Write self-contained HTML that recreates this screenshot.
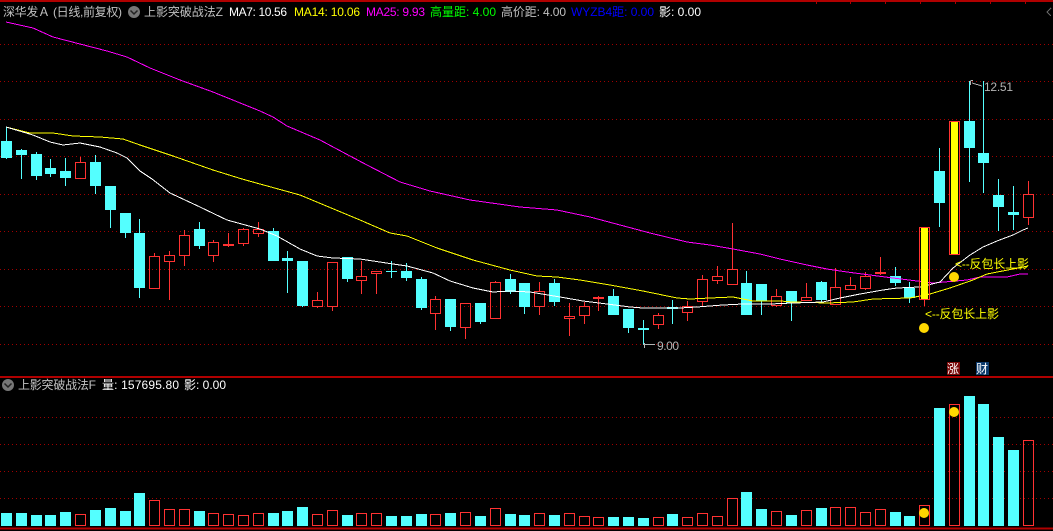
<!DOCTYPE html>
<html><head><meta charset="utf-8">
<style>
html,body{margin:0;padding:0;background:#000;width:1053px;height:531px;overflow:hidden}
svg{display:block}
text{font-family:"WenQuanYi Zen Hei","Liberation Sans","Noto Sans CJK SC",sans-serif;font-size:12px}
</style></head><body>
<svg width="1053" height="531" viewBox="0 0 1053 531" xmlns="http://www.w3.org/2000/svg">
<rect width="1053" height="531" fill="#000"/>
<g shape-rendering="crispEdges">
<path d="M0 44.5H1053M0 81.5H1053M0 119.5H1053M0 156.5H1053M0 194.5H1053M0 231.5H1053M0 269.5H1053M0 306.5H1053M0 344.5H1053M0 417.5H1053M0 444.5H1053M0 471.5H1053M0 498.5H1053" stroke="#a00000" stroke-dasharray="1 3" fill="none"/>
<path d="M0 1H1053M0 377H1053M0 528.5H1053" stroke="#b00000" stroke-width="2" fill="none"/>
<path d="M816.5 0V4M850.5 0V4M885.5 0V4M920.5 0V4M955.5 0V4M990.5 0V4M1025.5 0V4M23.5 0V2" stroke="#b00000" fill="none"/>

<!-- cyan wicks -->
<path stroke="#54ffff" fill="none" d="M6.5 127V159M21.5 149V179M36.5 152V180M50.5 159V177M65.5 158V186M95.5 155V194M110.5 186V228M125.5 213V238M139.5 219V298M199.5 222V249M273.5 228V261M287.5 251V293M302.5 261V307M347.5 257V282M391.5 261V278M406.5 263V281M421.5 277V310M450.5 299V331M480.5 303V324M510.5 274V294M524.5 283V314M554.5 279V306M613.5 289V315M628.5 309V333M643.5 320V345M672.5 300V324M746.5 271V315M761.5 284V315M791.5 291V321M821.5 281V303M895.5 267V286M909.5 282V303M939.5 148V227M969.5 81V182M983.5 81V193M998.5 179V231M1013.5 186V230"/>
<!-- cyan bodies -->
<path stroke="#54ffff" stroke-width="11" fill="none" d="M6.5 141V158M21.5 150V155M36.5 154V176M50.5 168V174M65.5 171V178M95.5 162V186M110.5 186V210M125.5 213V233M139.5 233V288M199.5 229V246M273.5 231V261M287.5 258V261M302.5 261V306M347.5 257V279M391.5 271V272M406.5 271V278M421.5 279V308M450.5 299V327M480.5 303V322M510.5 279V292M524.5 283V307M554.5 283V302M613.5 296V315M628.5 309V328M643.5 328V330M672.5 307V309M746.5 283V315M761.5 284V301M791.5 291V303M821.5 282V300M895.5 276V283M909.5 288V298M939.5 171V203M969.5 121V148M983.5 153V163M998.5 195V207M1013.5 212V215"/>
<!-- red wicks -->
<path stroke="#ff3232" fill="none" d="M80.5 157V162M154.5 253V256M169.5 251V255M169.5 262V300M184.5 230V235M184.5 256V266M213.5 240V242M213.5 256V262M228.5 233V244M228.5 246V247M243.5 228V229M243.5 244V246M258.5 222V229M258.5 234V237M317.5 292V300M317.5 307V308M332.5 307V311M361.5 261V276M361.5 281V294M376.5 274V294M435.5 296V299M435.5 314V330M465.5 328V339M495.5 281V282M539.5 282V291M539.5 307V315M569.5 303V316M569.5 319V336M584.5 302V306M584.5 316V324M598.5 296V297M598.5 299V311M658.5 313V315M658.5 325V329M687.5 301V306M687.5 313V321M702.5 275V279M702.5 302V307M717.5 266V276M717.5 281V284M732.5 223V269M776.5 289V296M776.5 306V307M806.5 283V297M835.5 268V287M850.5 277V285M865.5 272V276M865.5 289V290M880.5 257V272M880.5 274V275M924.5 300V306M1028.5 181V194M1028.5 218V225"/>
<!-- red bodies -->
<path stroke="#ff3232" fill="none" d="M75.5 162.5h10v16h-10zM149.5 256.5h10v32h-10zM164.5 255.5h10v6h-10zM179.5 235.5h10v20h-10zM208.5 242.5h10v13h-10zM223.5 244.5h10v1h-10zM238.5 229.5h10v14h-10zM253.5 229.5h10v4h-10zM312.5 300.5h10v6h-10zM327.5 262.5h10v44h-10zM356.5 276.5h10v4h-10zM371.5 271.5h10v2h-10zM430.5 299.5h10v14h-10zM460.5 303.5h10v24h-10zM490.5 282.5h10v36h-10zM534.5 291.5h10v15h-10zM564.5 316.5h10v2h-10zM579.5 306.5h10v9h-10zM593.5 297.5h10v1h-10zM653.5 315.5h10v9h-10zM682.5 306.5h10v6h-10zM697.5 279.5h10v22h-10zM712.5 276.5h10v4h-10zM727.5 269.5h10v15h-10zM771.5 296.5h10v9h-10zM801.5 297.5h10v3h-10zM830.5 287.5h10v17h-10zM845.5 285.5h10v4h-10zM860.5 276.5h10v12h-10zM875.5 272.5h10v1h-10zM1023.5 194.5h10v23h-10z"/>

<!-- moving averages -->
<polyline fill="none" stroke="#ff00ff" points="6,22 33,28 53,37 80,44 107,51 127,57 150,68 180,80 213,92 260,111 273,117 287,126 320,140 350,156 367,165 400,182 430,191 470,200 520,207 557,210 590,217 620,225 650,233 687,242 710,245 733,249 760,254 780,259 807,265 827,269 847,272 870,275 893,278 917,281 933,283 967,280 980,277 1007,277 1020,274 1028,274"/>
<polyline fill="none" stroke="#ffff00" points="6,127 30,133 53,133 73,136 100,137 123,139 140,145 173,156 213,170 242,179 260,184 300,195 336,210 360,220 390,233 407,236 437,248 473,260 510,270 537,276 557,277 580,280 610,285 643,291 677,298 690,299 710,298 733,297 753,301 780,301 793,302 827,303 853,302 873,299 910,298 930,294 950,288 973,280 987,274 1013,269 1028,266"/>
<polyline fill="none" stroke="#ffffff" points="6,127 33,135 50,142 63,145 80,143 100,147 117,153 127,158 140,171 152,179 170,193 200,207 227,220 260,229 277,236 300,249 317,256 333,258 360,259 393,264 407,266 433,273 450,281 473,288 493,292 510,291 530,292 560,297 583,301 607,304 630,307 643,308 680,308 697,307 723,305 743,304 770,304 793,303 823,302 840,298 860,294 883,290 897,288 920,287 940,282 953,268 970,255 983,247 997,241 1013,235 1023,230 1028,228"/>

<!-- signal bars -->
<rect x="921" y="228" width="7" height="71" fill="#ffff00"/>
<path stroke="#ff3232" fill="none" d="M919.5 227.5h10v72h-10z"/>
<rect x="951" y="122" width="7" height="132" fill="#ffff00"/>
<path stroke="#ff3232" fill="none" d="M949.5 121.5h10v133h-10z"/>

<!-- volume cyan -->
<path stroke="#54ffff" stroke-width="11" fill="none" d="M6.5 513V526M21.5 513V526M36.5 515V526M50.5 515V526M65.5 512V526M95.5 510V526M110.5 508V526M125.5 511V526M139.5 493V526M199.5 511V526M273.5 513V526M287.5 511V526M302.5 507V526M347.5 515V526M391.5 516V526M406.5 516V526M421.5 514V526M450.5 513V526M480.5 516V526M510.5 514V526M524.5 515V526M554.5 515V526M613.5 517V526M628.5 517V526M643.5 518V526M672.5 514V526M746.5 492V526M761.5 509V526M791.5 515V526M821.5 508V526M895.5 512V526M909.5 516V526M939.5 408V526M969.5 396V526M983.5 404V526M998.5 437V526M1013.5 450V526"/>
<!-- volume red -->
<path stroke="#ff3232" fill="none" d="M75.5 514.5h10V525.5h-10zM149.5 500.5h10V525.5h-10zM164.5 509.5h10V525.5h-10zM179.5 509.5h10V525.5h-10zM208.5 513.5h10V525.5h-10zM223.5 514.5h10V525.5h-10zM238.5 515.5h10V525.5h-10zM253.5 513.5h10V525.5h-10zM312.5 514.5h10V525.5h-10zM327.5 510.5h10V525.5h-10zM356.5 513.5h10V525.5h-10zM371.5 513.5h10V525.5h-10zM430.5 514.5h10V525.5h-10zM460.5 512.5h10V525.5h-10zM490.5 508.5h10V525.5h-10zM534.5 513.5h10V525.5h-10zM564.5 513.5h10V525.5h-10zM579.5 516.5h10V525.5h-10zM593.5 517.5h10V525.5h-10zM653.5 517.5h10V525.5h-10zM682.5 517.5h10V525.5h-10zM697.5 513.5h10V525.5h-10zM712.5 516.5h10V525.5h-10zM727.5 498.5h10V525.5h-10zM771.5 511.5h10V525.5h-10zM801.5 510.5h10V525.5h-10zM830.5 507.5h10V525.5h-10zM845.5 507.5h10V525.5h-10zM860.5 512.5h10V525.5h-10zM875.5 509.5h10V525.5h-10zM919.5 505.5h10V525.5h-10zM949.5 404.5h10V525.5h-10zM1023.5 440.5h10V525.5h-10z"/>

<!-- price marks -->
<path stroke="#b4b4b4" fill="none" d="M970.5 81V85M970.5 80.5H973M972 83L982 86M643 344.5H655M644.5 343V348"/>
<path stroke="#666" fill="none" d="M1051 8L1047 12L1051 16"/>
<rect x="947" y="362" width="13" height="13" fill="#7a0808"/>
<rect x="976" y="362" width="13" height="13" fill="#0c3a6c"/>
</g>

<circle cx="924" cy="328" r="5" fill="#ffd800"/>
<circle cx="954" cy="277" r="5" fill="#ffd800"/>
<circle cx="954" cy="412" r="5" fill="#ffd800"/>
<circle cx="924" cy="513" r="5" fill="#ffd800"/>

<circle cx="134" cy="12" r="6" fill="#777"/>
<path d="M130.500 10.500L134 14L137.500 10.500" stroke="#222" stroke-width="1.500" fill="none"/>
<circle cx="8" cy="385" r="6" fill="#777"/>
<path d="M4.500 383.500L8 387L11.500 383.500" stroke="#222" stroke-width="1.500" fill="none"/>

<!-- header text -->
<text x="3" y="16" fill="#c0c0c0" textLength="47">深华发Ａ</text>
<text x="53" y="16" fill="#c0c0c0" textLength="69">(日线,前复权)</text>
<text x="144" y="16" fill="#c0c0c0" textLength="79">上影突破战法Z</text>
<text x="229" y="16" fill="#ffffff" textLength="58">MA7: 10.56</text>
<text x="294" y="16" fill="#ffff00" textLength="66">MA14: 10.06</text>
<text x="366" y="16" fill="#ff00ff" textLength="59">MA25: 9.93</text>
<text x="430" y="16" fill="#00ff00" textLength="66">高量距: 4.00</text>
<text x="501" y="16" fill="#c0c0c0" textLength="65">高价距: 4.00</text>
<text x="571" y="16" fill="#0000ff" textLength="83">WYZB4距: 0.00</text>
<text x="659" y="16" fill="#ffffff" textLength="42">影: 0.00</text>

<!-- lower header -->
<text x="18" y="389" fill="#c0c0c0" textLength="78">上影突破战法F</text>
<text x="102" y="389" fill="#ffffff" textLength="77">量: 157695.80</text>
<text x="184" y="389" fill="#ffffff" textLength="42">影: 0.00</text>

<!-- labels -->
<text x="984" y="91" fill="#b4b4b4" textLength="29">12.51</text>
<text x="657" y="350" fill="#b4b4b4" textLength="22">9.00</text>
<text x="925" y="318" fill="#ffff00" textLength="74">&lt;--反包长上影</text>
<text x="955" y="268" fill="#ffff00" textLength="74">&lt;--反包长上影</text>
<text x="947" y="373" fill="#ffffff">涨</text>
<text x="976" y="373" fill="#ffffff">财</text>
</svg>
</body></html>
